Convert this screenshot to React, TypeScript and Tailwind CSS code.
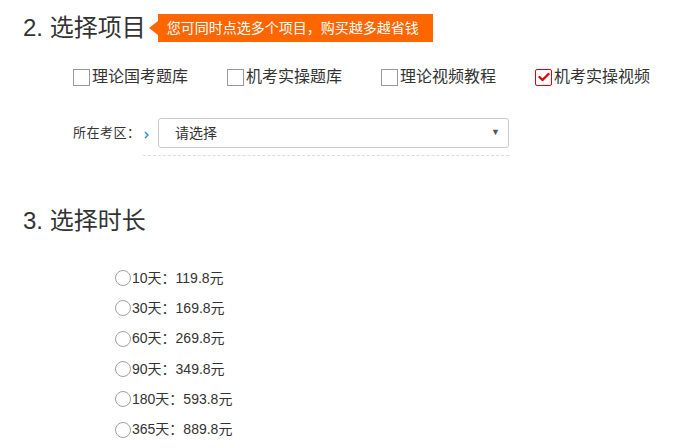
import React from 'react';

const FONT = { fontFamily: '"Liberation Sans", "Noto Sans CJK SC", sans-serif' };

const projects = [
  { name: '理论国考题库', checked: false },
  { name: '机考实操题库', checked: false },
  { name: '理论视频教程', checked: false },
  { name: '机考实操视频', checked: true },
];

const durations = [
  '10天：119.8元',
  '30天：169.8元',
  '60天：269.8元',
  '90天：349.8元',
  '180天：593.8元',
  '365天：889.8元',
];

function CheckBox({ checked }: { checked: boolean }) {
  if (checked) {
    return (
      <span className="w-[17px] h-[17px] border border-[#e0000a] rounded-[2px] bg-white flex items-center justify-center shrink-0">
        <svg width="12" height="10" viewBox="0 0 12 10">
          <path d="M1.5 5 L4.5 8 L10.5 2" stroke="#e0000a" strokeWidth="2.4" fill="none" strokeLinecap="round" strokeLinejoin="round" />
        </svg>
      </span>
    );
  }
  return <span className="w-[17px] h-[17px] border border-[#999] bg-white shrink-0" />;
}

function App() {
  return (
    <div className="w-[689px] h-[448px] bg-white text-[#333] overflow-hidden" style={FONT}>
      {/* 2. 选择项目 */}
      <div className="pl-[23px] pt-[14px] flex items-center h-[42px]">
        <h2 className="text-[24px] leading-[28px] text-[#333] whitespace-nowrap">2. 选择项目</h2>
        <div className="relative ml-[12px] h-[28px] bg-[#ff6600] text-white text-[14px] flex items-center px-[9px] w-[275px] whitespace-nowrap">
          <span className="absolute left-[-9px] top-[7px] w-0 h-0 border-y-[7px] border-y-transparent border-r-[9px] border-r-[#ff6600]" />
          您可同时点选多个项目，购买越多越省钱
        </div>
      </div>

      <div className="flex pl-[73px] mt-[26px]">
        {projects.map((p) => (
          <label key={p.name} className="w-[156px] flex items-center h-[18px] text-[16px] text-[#333] whitespace-nowrap">
            <CheckBox checked={p.checked} />
            <span className="ml-[2px] leading-[18px]">{p.name}</span>
          </label>
        ))}
      </div>

      <div className="flex items-center pl-[73px] mt-[32px]">
        <span className="text-[13px] text-[#333] w-[66px] shrink-0 whitespace-nowrap tracking-[0.5px]">所在考区：</span>
        <span className="w-[19px] shrink-0 pl-[5px] pt-[4px] flex">
          <svg width="5" height="8" viewBox="0 0 5 8">
            <path d="M1 1 L4 4 L1 7" stroke="#2a8ae0" strokeWidth="1.4" fill="none" />
          </svg>
        </span>
        <div className="w-[351px] h-[30px] border border-[#ccc] rounded-[3px] flex items-center justify-between pl-[16px] pr-[8px] text-[14px] text-[#333]">
          <span>请选择</span>
          <span className="text-[9px] text-[#555]">▼</span>
        </div>
      </div>
      <div className="ml-[143px] mt-[7px] w-[366px] border-t border-dashed border-[#ddd]" />

      {/* 3. 选择时长 */}
      <h2 className="pl-[23px] mt-[51px] text-[24px] leading-[28px] text-[#333]">3. 选择时长</h2>

      <div className="pl-[115px] mt-[28px] flex flex-col">
        {durations.map((d) => (
          <label key={d} className="flex items-center h-[30.3px] text-[14px] text-[#333] whitespace-nowrap">
            <span className="w-[16px] h-[16px] rounded-full border-[1.5px] border-[#a0a0a0] bg-white shrink-0" />
            <span className="ml-[1px]">{d}</span>
          </label>
        ))}
      </div>
    </div>
  );
}

export default App;
